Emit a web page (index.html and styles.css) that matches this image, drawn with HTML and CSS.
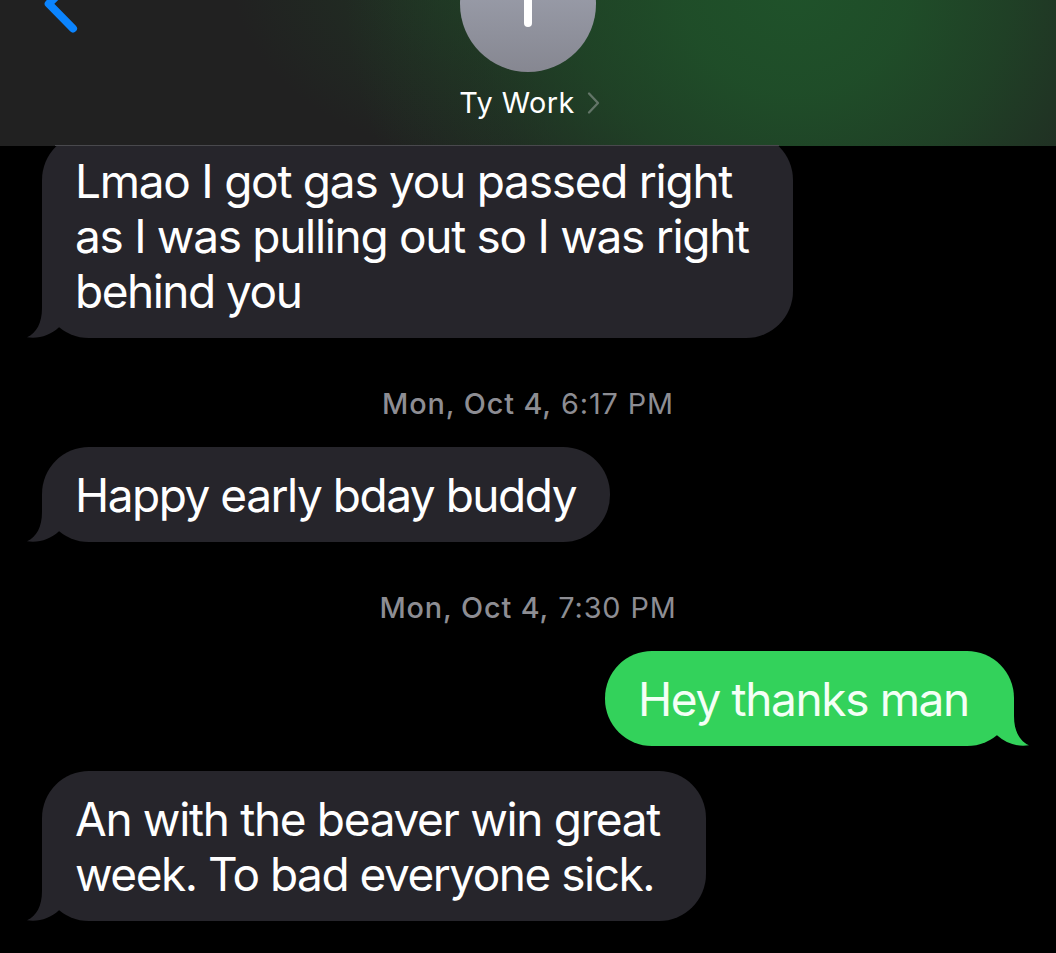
FILE: index.html
```
<!DOCTYPE html>
<html lang="en">
<head>
<meta charset="utf-8">
<title>Ty Work</title>
<link rel="stylesheet" href="styles.css">
</head>
<body>
<header class="header">
  <svg class="back" width="48" height="40" viewBox="0 0 48 40"><path d="M33 -20.500 L8.700 3.800 L33 28.500" fill="none" stroke="#0b84fe" stroke-width="8" stroke-linecap="round" stroke-linejoin="round"/></svg>
  <div class="avatar"><span class="initial"></span></div>
  <div class="contact"><span class="name">Ty Work</span><svg class="chevron" width="14" height="24" viewBox="0 0 14 24"><path d="M2 2.500 L11 12 L2 21.500" fill="none" stroke="#637568" stroke-width="2.300" stroke-linecap="round" stroke-linejoin="round"/></svg></div>
</header>
<main class="thread">
  <div class="bubble received first">
    <span class="line l1">Lmao I got gas you passed right</span>
    <span class="line l2">as I was pulling out so I was right</span>
    <span class="line l3">behind you</span>
    <svg class="tail" width="32" height="50" viewBox="0 0 32 50"><path d="M14 3V20C14 35 8.500 45 -1 49.300C11 51 22 47.500 31 39.300V3Z"/></svg>
  </div>
  <div class="stamp s1"><b>Mon, Oct 4,</b> 6:17 PM</div>
  <div class="bubble received second">
    <span class="line l4">Happy early bday buddy</span>
    <svg class="tail" width="32" height="50" viewBox="0 0 32 50"><path d="M14 3V20C14 35 8.500 45 -1 49.300C11 51 22 47.500 31 39.300V3Z"/></svg>
  </div>
  <div class="stamp s2"><b>Mon, Oct 4,</b> 7:30 PM</div>
  <div class="bubble sent">
    <span class="line l5">Hey thanks man</span>
    <svg class="tail" width="32" height="50" viewBox="0 0 32 50"><path d="M14 3V20C14 35 8.500 45 -1 49.300C11 51 22 47.500 31 39.300V3Z"/></svg>
  </div>
  <div class="bubble received last">
    <span class="line l6">An with the beaver win great</span>
    <span class="line l7">week. To bad everyone sick.</span>
    <svg class="tail" width="32" height="50" viewBox="0 0 32 50"><path d="M14 3V20C14 35 8.500 45 -1 49.300C11 51 22 47.500 31 39.300V3Z"/></svg>
  </div>
</main>
</body>
</html>
```
FILE: styles.css
```
* { box-sizing: border-box; }
body {
  margin: 0;
  height: 953px;
  overflow: hidden;
  background: #000;
  color: #fff;
  font-family: Inter, "Liberation Sans", sans-serif;
}
.header {
  position: relative;
  z-index: 2;
  height: 146px;
  overflow: hidden;
  display: flex;
  flex-direction: column;
  align-items: center;
  background:
    radial-gradient(ellipse 450px 420px at 795px -10px, #1f522a 0%, rgba(31, 80, 41, .93) 25%, rgba(31, 77, 40, .7) 48%, rgba(31, 74, 39, .32) 72%, rgba(31, 70, 38, 0) 100%),
    radial-gradient(ellipse 270px 190px at 500px -30px, rgba(31, 74, 39, .6) 0%, rgba(31, 70, 38, .25) 55%, rgba(31, 70, 38, 0) 100%),
    #212121;
}
.header::after {
  content: "";
  position: absolute;
  left: 55px;
  right: 277px;
  bottom: 0;
  height: 1px;
  background: #49494d;
}
.back { position: absolute; left: 40px; top: 0; }
.avatar {
  flex: none;
  width: 136px;
  height: 136px;
  margin-top: -64px;
  border-radius: 50%;
  background: linear-gradient(#a5a9b7, #868791);
  display: flex;
  justify-content: center;
}
.initial { width: 8px; height: 91px; border-radius: 4px; background: #fff; }
.contact { display: flex; align-items: center; gap: 12px; margin: 13px 0 0 4px; height: 36px; }
.name { font-size: 28.800px; line-height: 36px; letter-spacing: .45px; }
.thread { display: flex; flex-direction: column; align-items: flex-start; margin-top: -13px; padding: 0 42px; }
.bubble {
  position: relative;
  flex: none;
  padding: 21px 33px 19px;
  border-radius: 47px;
  background: #26252b;
  font-size: 46px;
  line-height: 55px;
}
.line { display: block; white-space: nowrap; }
.l1 { letter-spacing: -1.260px; }
.l2 { letter-spacing: -1.300px; }
.l3 { letter-spacing: -1.500px; }
.l4 { letter-spacing: -1.480px; }
.l5 { letter-spacing: -1.360px; }
.l6 { letter-spacing: -1.330px; }
.l7 { letter-spacing: -1.500px; }
.tail { position: absolute; left: -14px; bottom: 0; fill: #26252b; overflow: visible; }
.first { width: 751px; }
.second { width: 568px; }
.sent { width: 409px; align-self: flex-end; background: #33d25b; color: #f4fff6; }
.sent .tail { left: auto; right: -14px; transform: scaleX(-1); fill: #33d25b; }
.last { width: 664px; margin-top: 25px; }
.stamp {
  align-self: center;
  height: 109px;
  padding-top: 48px;
  font-size: 28.800px;
  line-height: 36px;
  color: #8d8d93;
  letter-spacing: .9px;
  white-space: nowrap;
}
.stamp b { font-weight: 500; }
```
